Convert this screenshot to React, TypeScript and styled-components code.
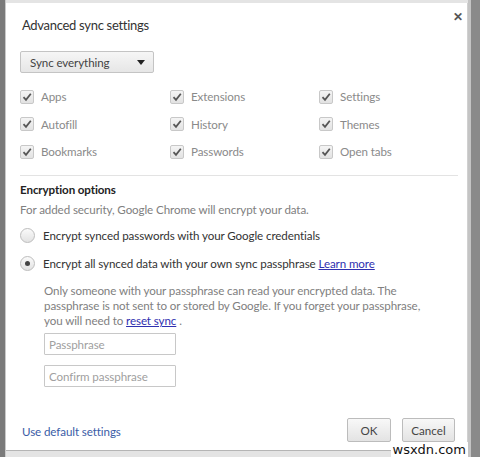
import React from "react";
import styled, { createGlobalStyle } from "styled-components";

const GlobalStyle = createGlobalStyle`
  html, body {
    margin: 0;
    padding: 0;
    background: #8a8a8a;
    font-family: Lato, "Open Sans", "Liberation Sans", sans-serif;
  }
`;

const Screen = styled.div`
  width: 480px;
  height: 457px;
  box-sizing: border-box;
  padding: 3px 10px 6px 6px;
  background: linear-gradient(90deg, #7a7a7a 0 5px, #c9c9c9 5px 6px, #e4e4e4 6px 468px, #c4c4c4 468px 471px, #8a8a8a 471px);
  position: relative;
  overflow: hidden;
`;

const Dialog = styled.div`
  width: 462px;
  height: 448px;
  box-sizing: border-box;
  background: #fff;
  border-right: 1px solid #d0d0d0;
  border-bottom: 1px solid #b5b5b5;
  padding: 12px 5px 0 14px;
  display: flex;
  flex-direction: column;
  position: relative;
  font-size: 11.6px;
  letter-spacing: -0.1px;
`;

const Header = styled.div`
  display: flex;
  justify-content: space-between;
  align-items: flex-start;
  margin-left: 2px;
`;

const Title = styled.h1`
  margin: 0;
  font-size: 13px;
  letter-spacing: -0.3px;
  font-weight: 400;
  color: #333;
  line-height: 20px;
`;

const Close = styled.span`
  font-size: 12px;
  font-weight: 700;
  color: #555;
  line-height: 12px;
  margin-top: -4px;
  margin-right: -1px;
`;

const Select = styled.div`
  margin-top: 16px;
  width: 134px;
  height: 22px;
  box-sizing: border-box;
  border: 1px solid #c4c4c4;
  border-radius: 2px;
  background: linear-gradient(#f6f6f6, #e6e6e6);
  display: flex;
  align-items: center;
  justify-content: space-between;
  padding: 0 8px 0 9px;
  color: #444;
`;

const Arrow = styled.span`
  width: 0;
  height: 0;
  border-left: 4px solid transparent;
  border-right: 4px solid transparent;
  border-top: 5px solid #222;
`;

const CheckGrid = styled.div`
  margin-top: 14px;
  display: grid;
  grid-template-columns: 150px 149px 1fr;
  row-gap: 8.5px;
  padding-bottom: 14px;
  border-bottom: 1px solid #e3e3e3;
  margin-right: 4px;
`;

const CheckItem = styled.label`
  display: flex;
  align-items: center;
  gap: 7px;
  height: 19px;
  color: #8a8a8a;
`;

const Box = styled.span`
  width: 12px;
  height: 12px;
  border: 1px solid #c8c8c8;
  border-radius: 2px;
  background: linear-gradient(#f4f4f4, #e2e2e2);
  display: flex;
  align-items: center;
  justify-content: center;
`;

const SectionTitle = styled.h2`
  margin: 6px 0 0;
  font-size: 11.6px;
  font-weight: 700;
  color: #222;
  line-height: 16px;
`;

const Note = styled.p`
  margin: 4px 0 0;
  color: #808080;
  line-height: 16px;
`;

const RadioRow = styled.div<{ $top: number }>`
  margin-top: ${(p) => p.$top}px;
  display: flex;
  align-items: center;
  gap: 8px;
  color: #333;
  height: 18px;
`;

const Radio = styled.span<{ $on?: boolean }>`
  width: 13px;
  height: 13px;
  border-radius: 50%;
  border: 1px solid #bdbdbd;
  background: linear-gradient(#fafafa, #e2e2e2);
  display: flex;
  align-items: center;
  justify-content: center;
  &::after {
    content: "";
    width: 5px;
    height: 5px;
    border-radius: 50%;
    background: ${(p) => (p.$on ? "#444" : "transparent")};
  }
`;

const Link = styled.a`
  color: #3030b0;
  text-decoration: underline;
`;

const Indented = styled.div`
  margin-left: 24px;
  margin-top: 11px;
  display: flex;
  flex-direction: column;
`;

const Paragraph = styled.p`
  margin: 0;
  line-height: 15px;
  color: #808080;
  white-space: nowrap;
`;

const Field = styled.input<{ $top: number }>`
  margin-top: ${(p) => p.$top}px;
  width: 132px;
  height: 22px;
  box-sizing: border-box;
  border: 1px solid #c8c8c8;
  border-radius: 1px;
  padding: 0 4px;
  font-family: inherit;
  font-size: 11.6px;
  letter-spacing: -0.1px;
  color: #333;
  outline: none;
  &::placeholder {
    color: #a0a0a0;
  }
`;

const Footer = styled.div`
  margin-top: auto;
  margin-bottom: 8px;
  display: flex;
  align-items: center;
  justify-content: space-between;
  margin-left: 2px;
  margin-right: 7px;
`;

const DefaultLink = styled.span`
  color: #3a5ca6;
  margin-top: 2px;
`;

const Buttons = styled.div`
  display: flex;
  gap: 11px;
`;

const Button = styled.button<{ $w: number }>`
  width: ${(p) => p.$w}px;
  height: 24px;
  border: 1px solid #bcbcbc;
  border-radius: 2px;
  background: linear-gradient(#f8f8f8, #e3e3e3);
  font-family: inherit;
  font-size: 11.6px;
  color: #444;
  padding: 0;
`;

const Watermark = styled.span`
  position: absolute;
  right: 12px;
  bottom: 0;
  background: #fff;
  padding: 0 2px;
  font-family: "DejaVu Sans", sans-serif;
  font-size: 13px;
  line-height: 15px;
  color: #111;
`;

const Tick = () => (
  <svg width="10" height="10" viewBox="0 0 10 10">
    <path d="M1.5 5.2 L4 7.8 L8.8 1.8" fill="none" stroke="#555" strokeWidth="1.8" />
  </svg>
);

const items = [
  "Apps", "Extensions", "Settings",
  "Autofill", "History", "Themes",
  "Bookmarks", "Passwords", "Open tabs",
];

export default function App() {
  return (
    <>
      <GlobalStyle />
      <Screen>
        <Dialog>
          <Header>
            <Title>Advanced sync settings</Title>
            <Close>✕</Close>
          </Header>
          <Select>
            <span>Sync everything</span>
            <Arrow />
          </Select>
          <CheckGrid>
            {items.map((t) => (
              <CheckItem key={t}>
                <Box>
                  <Tick />
                </Box>
                {t}
              </CheckItem>
            ))}
          </CheckGrid>
          <SectionTitle>Encryption options</SectionTitle>
          <Note>For added security, Google Chrome will encrypt your data.</Note>
          <RadioRow $top={8}>
            <Radio />
            Encrypt synced passwords with your Google credentials
          </RadioRow>
          <RadioRow $top={10}>
            <Radio $on />
            <span>
              Encrypt all synced data with your own sync passphrase <Link>Learn more</Link>
            </span>
          </RadioRow>
          <Indented>
            <Paragraph>
              Only someone with your passphrase can read your encrypted data. The
              <br />
              passphrase is not sent to or stored by Google. If you forget your passphrase,
              <br />
              you will need to <Link>reset sync</Link> .
            </Paragraph>
            <Field $top={5} placeholder="Passphrase" />
            <Field $top={10} placeholder="Confirm passphrase" />
          </Indented>
          <Footer>
            <DefaultLink>Use default settings</DefaultLink>
            <Buttons>
              <Button $w={44}>OK</Button>
              <Button $w={53}>Cancel</Button>
            </Buttons>
          </Footer>
        </Dialog>
        <Watermark>wsxdn.com</Watermark>
      </Screen>
    </>
  );
}
